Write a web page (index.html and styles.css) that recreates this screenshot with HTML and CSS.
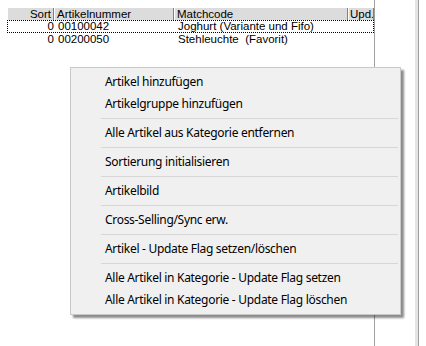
FILE: index.html
```html
<!DOCTYPE html>
<html>
<head>
<meta charset="utf-8">
<link rel="stylesheet" href="styles.css">
</head>
<body>
<div class="app">
  <div class="list">
    <div class="grid head">
      <div class="hc num">Sort</div>
      <div class="hc">Artikelnummer</div>
      <div class="hc">Matchcode</div>
      <div class="hc last">Upd.</div>
    </div>
    <div class="grid row focus">
      <div class="c num">0</div>
      <div class="c">00100042</div>
      <div class="c">Joghurt (Variante und Fifo)</div>
      <div class="c"></div>
    </div>
    <div class="grid row">
      <div class="c num">0</div>
      <div class="c">00200050</div>
      <div class="c">Stehleuchte&nbsp; (Favorit)</div>
      <div class="c"></div>
    </div>
  </div>
  <div class="gap"></div>
  <div class="bar"></div>
</div>
<div class="menu">
  <div class="item">Artikel hinzufügen</div>
  <div class="item">Artikelgruppe hinzufügen</div>
  <div class="sep"></div>
  <div class="item">Alle Artikel aus Kategorie entfernen</div>
  <div class="sep"></div>
  <div class="item">Sortierung initialisieren</div>
  <div class="sep"></div>
  <div class="item">Artikelbild</div>
  <div class="sep"></div>
  <div class="item">Cross-Selling/Sync erw.</div>
  <div class="sep"></div>
  <div class="item">Artikel - Update Flag setzen/löschen</div>
  <div class="sep"></div>
  <div class="item">Alle Artikel in Kategorie - Update Flag setzen</div>
  <div class="item">Alle Artikel in Kategorie - Update Flag löschen</div>
</div>
</body>
</html>
```
FILE: styles.css
```css
html, body {
  margin: 0;
  padding: 0;
  background: #fff;
}
.app {
  display: flex;
  height: 346px;
  width: 426px;
  overflow: hidden;
}
.list {
  margin-left: 7px;
  padding-top: 8px;
  width: 367px;
  border-right: 1px solid #a0a0a0;
  font-family: "Liberation Sans", Arial, sans-serif;
  font-size: 11.5px;
  color: #000;
}
.gap {
  width: 40px;
}
.bar {
  width: 3px;
  background: #e4e4e4;
  border-right: 1px solid #a0a0a0;
}
.grid {
  display: grid;
  grid-template-columns: 47px 120px 174px 26px;
}
.head {
  height: 12px;
  line-height: 12px;
}
.hc {
  background: #dcdcdc;
  border-right: 1px solid #808080;
  box-shadow: inset 1px 0 0 #fff;
  padding-left: 3px;
  white-space: nowrap;
  overflow: hidden;
}
.hc.last {
  padding-left: 2px;
}
.hc.num, .c.num {
  text-align: right;
  padding-left: 0;
  padding-right: 2px;
}
.row {
  height: 13px;
  line-height: 13px;
  box-sizing: border-box;
  border: 1px dotted transparent;
}
.row.focus {
  border: 1px dotted #000;
}
.row .c {
  white-space: nowrap;
  overflow: hidden;
  padding-left: 3px;
  line-height: 11px;
}
.row .c.num {
  padding-left: 0;
  padding-right: 1px;
}
.menu {
  position: absolute;
  left: 70px;
  top: 67px;
  width: 327px;
  height: 243px;
  padding: 3px 2px 0 0;
  background: #f0f0f0;
  border: 1px solid #c9c9c9;
  box-shadow: 3px 3px 2px rgba(0,0,0,0.45);
  font-family: "Noto Sans", "Segoe UI", sans-serif;
  font-size: 12px;
  letter-spacing: -0.3px;
  color: #000;
}
.item {
  height: 22px;
  line-height: 22px;
  padding-left: 34px;
  white-space: nowrap;
}
.sep {
  height: 7px;
  margin-left: 30px;
  position: relative;
}
.sep::before {
  content: "";
  position: absolute;
  left: 0;
  right: 0;
  top: 3px;
  height: 1px;
  background: #d7d7d7;
}
```
